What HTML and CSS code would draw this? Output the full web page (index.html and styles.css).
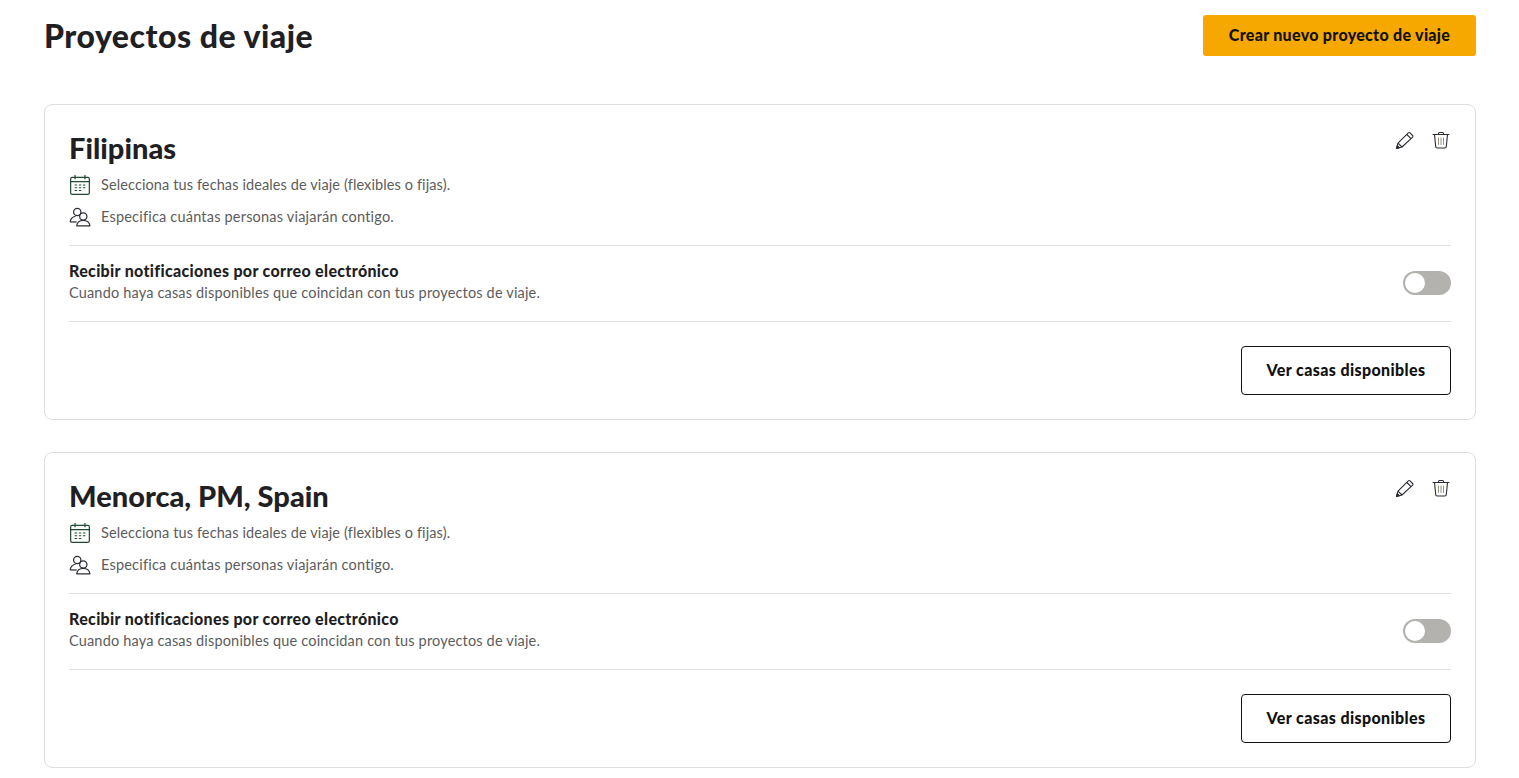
FILE: index.html
```html
<!DOCTYPE html>
<html lang="es">
<head>
  <meta charset="UTF-8">
  <title>Proyectos de viaje</title>
  <link rel="stylesheet" href="styles.css">
</head>
<body>

  <div class="page-header">
    <h1>Proyectos de viaje</h1>
    <button class="btn-create">Crear nuevo proyecto de viaje</button>
  </div>

  <!-- Filipinas -->
  <div class="project-card">
    <div class="card-actions">
      <svg class="icon-action" viewBox="0 0 20 20" fill="none" stroke="#2b2b33" stroke-width="1.1" stroke-linejoin="round"><path d="M1.500 18.500l1.500-5.300L13.300 2.900a1.200 1.200 0 0 1 1.700 0l2.600 2.600a1.200 1.200 0 0 1 0 1.700L7 17z"/><path d="M3 13.200L7 17M11.800 4.500l4.200 4.200"/><path d="M1.500 18.500l.8-2.900 2.100 2.100z" fill="#2b2b33"/></svg>
      <svg class="icon-action" viewBox="0 0 20 20" fill="none" stroke="#2b2b33" stroke-width="1.1" stroke-linecap="round" stroke-linejoin="round"><path d="M2 4.500h16M7.500 4.500V3.500a1 1 0 0 1 1-1h3a1 1 0 0 1 1 1v1M3.500 4.500l1.200 12a1.500 1.500 0 0 0 1.500 1.500h7.600a1.500 1.500 0 0 0 1.500-1.500l1.200-12"/><path class="trash-bars" d="M7.500 8v6.500M10 8v6.500M12.500 8v6.500"/></svg>
    </div>
    <h2>Filipinas</h2>
    <div class="info-row">
      <svg class="icon-info" viewBox="0 0 20 20" fill="none" stroke="#1f4a32" stroke-width="1.100" stroke-linecap="round"><rect x="1.500" y="3" width="17" height="15.500" rx="1.500"/><path d="M1.500 7h17M5.500 1.200v3.200M14.500 1.200v3.200"/><path d="M5.500 10h1.500M9.300 10h1.500M13 10h1.500M5.500 12.500h1.500M9.300 12.500h1.500M13 12.500h1.500M5.500 15h1.500M9.300 15h1.500" stroke-width="1"/></svg>
      <span>Selecciona tus fechas ideales de viaje (flexibles o fijas).</span>
    </div>
    <div class="info-row">
      <svg class="icon-info" viewBox="0 0 20 20" fill="none" stroke="#2b2b33" stroke-width="1.100" stroke-linejoin="round"><circle cx="7.500" cy="5.500" r="3.300"/><path d="M1 14.500c.5-3 2.500-4.800 5-5.200"/><path d="M1 14.500h6"/><circle cx="13" cy="9.500" r="3.300"/><path d="M7 18c.3-3 2.800-5 6-5s5.700 2 6 5z"/></svg>
      <span class="info-people">Especifica cuántas personas viajarán contigo.</span>
    </div>
    <div class="notify-row">
      <div class="notify-info">
        <div class="notify-title">Recibir notificaciones por correo electrónico</div>
        <div class="notify-text">Cuando haya casas disponibles que coincidan con tus proyectos de viaje.</div>
      </div>
      <div class="toggle"><div class="toggle-knob"></div></div>
    </div>
    <div class="card-footer">
      <button class="btn-outline">Ver casas disponibles</button>
    </div>
  </div>

  <!-- Menorca -->
  <div class="project-card">
    <div class="card-actions">
      <svg class="icon-action" viewBox="0 0 20 20" fill="none" stroke="#2b2b33" stroke-width="1.1" stroke-linejoin="round"><path d="M1.500 18.500l1.500-5.300L13.300 2.900a1.200 1.200 0 0 1 1.700 0l2.600 2.600a1.200 1.200 0 0 1 0 1.700L7 17z"/><path d="M3 13.200L7 17M11.800 4.500l4.200 4.200"/><path d="M1.500 18.500l.8-2.900 2.100 2.100z" fill="#2b2b33"/></svg>
      <svg class="icon-action" viewBox="0 0 20 20" fill="none" stroke="#2b2b33" stroke-width="1.1" stroke-linecap="round" stroke-linejoin="round"><path d="M2 4.500h16M7.500 4.500V3.500a1 1 0 0 1 1-1h3a1 1 0 0 1 1 1v1M3.500 4.500l1.200 12a1.500 1.500 0 0 0 1.500 1.500h7.600a1.500 1.500 0 0 0 1.500-1.500l1.200-12"/><path class="trash-bars" d="M7.500 8v6.500M10 8v6.500M12.500 8v6.500"/></svg>
    </div>
    <h2>Menorca, PM, Spain</h2>
    <div class="info-row">
      <svg class="icon-info" viewBox="0 0 20 20" fill="none" stroke="#1f4a32" stroke-width="1.100" stroke-linecap="round"><rect x="1.500" y="3" width="17" height="15.500" rx="1.500"/><path d="M1.500 7h17M5.500 1.200v3.200M14.500 1.200v3.200"/><path d="M5.500 10h1.500M9.300 10h1.500M13 10h1.500M5.500 12.500h1.500M9.300 12.500h1.500M13 12.500h1.500M5.500 15h1.500M9.300 15h1.500" stroke-width="1"/></svg>
      <span>Selecciona tus fechas ideales de viaje (flexibles o fijas).</span>
    </div>
    <div class="info-row">
      <svg class="icon-info" viewBox="0 0 20 20" fill="none" stroke="#2b2b33" stroke-width="1.100" stroke-linejoin="round"><circle cx="7.500" cy="5.500" r="3.300"/><path d="M1 14.500c.5-3 2.500-4.800 5-5.200"/><path d="M1 14.500h6"/><circle cx="13" cy="9.500" r="3.300"/><path d="M7 18c.3-3 2.800-5 6-5s5.700 2 6 5z"/></svg>
      <span class="info-people">Especifica cuántas personas viajarán contigo.</span>
    </div>
    <div class="notify-row">
      <div class="notify-info">
        <div class="notify-title">Recibir notificaciones por correo electrónico</div>
        <div class="notify-text">Cuando haya casas disponibles que coincidan con tus proyectos de viaje.</div>
      </div>
      <div class="toggle"><div class="toggle-knob"></div></div>
    </div>
    <div class="card-footer">
      <button class="btn-outline">Ver casas disponibles</button>
    </div>
  </div>

</body>
</html>
```

FILE: styles.css
```css
/* Global Styles */
body {
  font-family: 'Lato', sans-serif;
  background-color: #fff;
  color: #1f1f24;
  margin: 0;
  padding: 15px 43px 10px 44px;
}

/* Header */
.page-header {
  display: flex;
  justify-content: space-between;
  align-items: flex-start;
  height: 89px;
}

h1 {
  font-size: 32px;
  font-weight: 900;
  letter-spacing: 0.5px;
  line-height: 41px;
  margin: 0;
}

.btn-create {
  width: 273px;
  height: 41px;
  background-color: #f7a800;
  border: none;
  border-radius: 3px;
  font-family: inherit;
  font-size: 16px;
  font-weight: 900;
  letter-spacing: 0.3px;
  color: #111;
  padding-bottom: 3px;
}

/* Project card */
.project-card {
  position: relative;
  height: 316px;
  box-sizing: border-box;
  border: 1px solid #dedede;
  border-radius: 8px;
  padding: 24px;
  margin-bottom: 32px;
}

.project-card:last-child {
  margin-bottom: 0;
}

.card-actions {
  position: absolute;
  top: 25px;
  right: 24px;
  display: flex;
  gap: 16px;
}

.icon-action {
  width: 20px;
  height: 20px;
  display: block;
}

.trash-bars {
  stroke: #7d7463;
  stroke-width: 0.8;
}

h2 {
  font-size: 29px;
  font-weight: 900;
  line-height: 38px;
  margin: 0 0 2px;
}

.info-row {
  display: flex;
  align-items: center;
  gap: 10px;
  height: 32px;
  font-size: 14.5px;
  letter-spacing: 0.11px;
  color: #5c5c5c;
}

.info-row span {
  padding-bottom: 1px;
}

.info-row .info-people {
  letter-spacing: 0.2px;
}

.icon-info {
  width: 22px;
  height: 22px;
  flex: none;
}

/* Notifications */
.notify-row {
  display: flex;
  justify-content: space-between;
  align-items: center;
  height: 75px;
  margin-top: 12px;
  border-top: 1px solid #e0e0e0;
  border-bottom: 1px solid #e0e0e0;
}

.notify-info {
  padding-bottom: 4px;
}

.notify-title {
  font-size: 16px;
  font-weight: 900;
  letter-spacing: 0.32px;
  line-height: 22px;
  color: #1f1f24;
}

.notify-text {
  font-size: 14.5px;
  letter-spacing: 0.17px;
  line-height: 22px;
  color: #5c5c5c;
}

.toggle {
  width: 48px;
  height: 24px;
  background-color: #b3b2ae;
  border-radius: 12px;
  padding: 2px;
  box-sizing: border-box;
  margin-bottom: 2px;
}

.toggle-knob {
  width: 20px;
  height: 20px;
  background-color: #fff;
  border-radius: 50%;
}

/* Footer */
.card-footer {
  display: flex;
  justify-content: flex-end;
  margin-top: 24px;
}

.btn-outline {
  width: 210px;
  height: 49px;
  background-color: #fff;
  border: 1px solid #111;
  border-radius: 4px;
  font-family: inherit;
  font-size: 16px;
  font-weight: 900;
  letter-spacing: 0.38px;
  color: #111;
  padding-bottom: 3px;
}
```
